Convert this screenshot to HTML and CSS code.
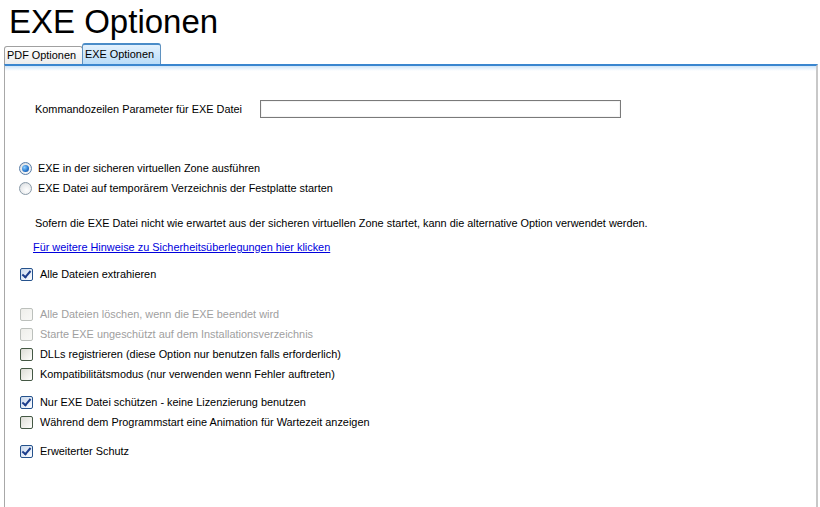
FILE: index.html
```html
<!DOCTYPE html>
<html lang="de">
<head>
    <meta charset="UTF-8">
    <title>EXE Optionen</title>
    <link rel="stylesheet" href="styles.css">
</head>
<body>
    <h1 class="page-title">EXE Optionen</h1>

    <!-- Tabs -->
    <div class="tabs">
        <div class="tab">PDF Optionen</div>
        <div class="tab tab-active">EXE Optionen</div>
    </div>

    <!-- Tab Panel -->
    <div class="panel">
        <div class="param-row">
            <label class="param-label" for="cmd-params">Kommandozeilen Parameter für EXE Datei</label>
            <input type="text" id="cmd-params" class="param-input">
        </div>

        <div class="radio-group">
            <div class="option"><span class="radio radio-on"></span>EXE in der sicheren virtuellen Zone ausführen</div>
            <div class="option"><span class="radio"></span>EXE Datei auf temporärem Verzeichnis der Festplatte starten</div>
        </div>

        <p class="hint">Sofern die EXE Datei nicht wie erwartet aus der sicheren virtuellen Zone startet, kann die alternative Option verwendet werden.</p>
        <a class="hint-link" href="#">Für weitere Hinweise zu Sicherheitsüberlegungen hier klicken</a>

        <div class="check-group">
            <div class="option check-row"><span class="check check-on"></span>Alle Dateien extrahieren</div>
        </div>

        <div class="check-group group-wide">
            <div class="option check-row disabled"><span class="check"></span>Alle Dateien löschen, wenn die EXE beendet wird</div>
            <div class="option check-row disabled"><span class="check"></span>Starte EXE ungeschützt auf dem Installationsverzeichnis</div>
            <div class="option check-row"><span class="check"></span>DLLs registrieren (diese Option nur benutzen falls erforderlich)</div>
            <div class="option check-row"><span class="check"></span>Kompatibilitätsmodus (nur verwenden wenn Fehler auftreten)</div>
        </div>

        <div class="check-group">
            <div class="option check-row"><span class="check check-on"></span>Nur EXE Datei schützen - keine Lizenzierung benutzen</div>
            <div class="option check-row"><span class="check"></span>Während dem Programmstart eine Animation für Wartezeit anzeigen</div>
        </div>

        <div class="check-group group-last">
            <div class="option check-row"><span class="check check-on"></span>Erweiterter Schutz</div>
        </div>
    </div>
</body>
</html>
```

FILE: styles.css
```css
body {
    margin: 0;
    padding: 0;
    background-color: #fff;
    font-family: "Liberation Sans", Arial, sans-serif;
    font-size: 10.9px;
    color: #000;
}

/* Title */
.page-title {
    margin: 0;
    padding: 3px 0 0 9px;
    font-size: 33px;
    font-weight: normal;
    line-height: 37px;
}

/* Tabs */
.tabs {
    display: flex;
    align-items: flex-end;
    padding: 4px 0 0 4px;
    height: 20px;
}

.tab {
    height: 17px;
    line-height: 17px;
    padding: 0 3px 0 2px;
    width: 72px;
    border: 1px solid #a0a0a0;
    border-bottom: none;
    border-radius: 3px 3px 0 0;
    background: linear-gradient(#ffffff, #ececec);
}

.tab-active {
    height: 19px;
    line-height: 19px;
    width: 72px;
    border-color: #5f92c0;
    border-top: 2px solid #4a8cc8;
    background: linear-gradient(#e3f1fd, #b9dcf8);
    margin-left: -1px;
}

/* Panel */
.panel {
    margin: 0 2px 0 4px;
    height: 443px;
    border-left: 1px solid #a8a8a8;
    border-right: 2px solid #c8c8c8;
    border-top: 2px solid #3a86cf;
    background: linear-gradient(#cfe5f9 0, #ffffff 5px, #ffffff 100%);
    padding: 0 0 0 14px;
}

/* Command line parameter */
.param-row {
    display: flex;
    align-items: center;
    padding: 34px 0 0 16px;
}

.param-label {
    width: 225px;
}

.param-input {
    width: 359px;
    height: 16px;
    margin: 0;
    padding: 0;
    border: 1px solid #7a7a7a;
    box-shadow: inset 0 0 0 1px #f4f4f4;
}

/* Options */
.radio-group {
    margin-top: 40px;
}

.option {
    display: flex;
    align-items: center;
    height: 20px;
    white-space: nowrap;
}

.radio {
    width: 11px;
    height: 11px;
    margin-right: 6px;
    border: 1px solid #8a9aa8;
    border-radius: 50%;
    background: radial-gradient(circle at 60% 65%, #ffffff 0, #e8eaec 60%, #c0c6cc 100%);
    position: relative;
}

.radio-on {
    border-color: #5a7ea8;
}

.radio-on::after {
    content: "";
    position: absolute;
    left: 2px;
    top: 2px;
    width: 7px;
    height: 7px;
    border-radius: 50%;
    background: radial-gradient(circle at 35% 35%, #8fd0ff 0, #2a7ad0 55%, #124a94 100%);
}

.hint {
    margin: 18px 0 0 16px;
    line-height: 14px;
}

.hint-link {
    display: block;
    margin: 10px 0 0 14px;
    color: #0000dd;
    line-height: 14px;
}

.check-group {
    margin-top: 10px;
}

.check-group + .check-group {
    margin-top: 8px;
}

.check-group.group-wide {
    margin-top: 20px;
}

.check-group.group-last {
    margin-top: 9px;
}

.check-row {
    padding-left: 1px;
}

.check {
    width: 11px;
    height: 11px;
    margin-right: 7px;
    border: 1px solid #445844;
    border-radius: 2px;
    background: linear-gradient(135deg, #dcdcd6 0, #f4f4f0 70%, #ffffff 100%);
    position: relative;
}

.check-on {
    border-color: #25528c;
    background: linear-gradient(135deg, #c9d8ec 0, #eef3fb 70%, #ffffff 100%);
}

.check-on::after {
    content: "";
    position: absolute;
    left: 3px;
    top: 0;
    width: 3px;
    height: 7px;
    border-right: 2px solid #1c3d8c;
    border-bottom: 2px solid #1c3d8c;
    transform: rotate(40deg);
}

.disabled {
    color: #a0a0a0;
}

.disabled .check {
    border-color: #bcc0bc;
    background: linear-gradient(135deg, #eeeeea 0, #f8f8f6 100%);
}
```
